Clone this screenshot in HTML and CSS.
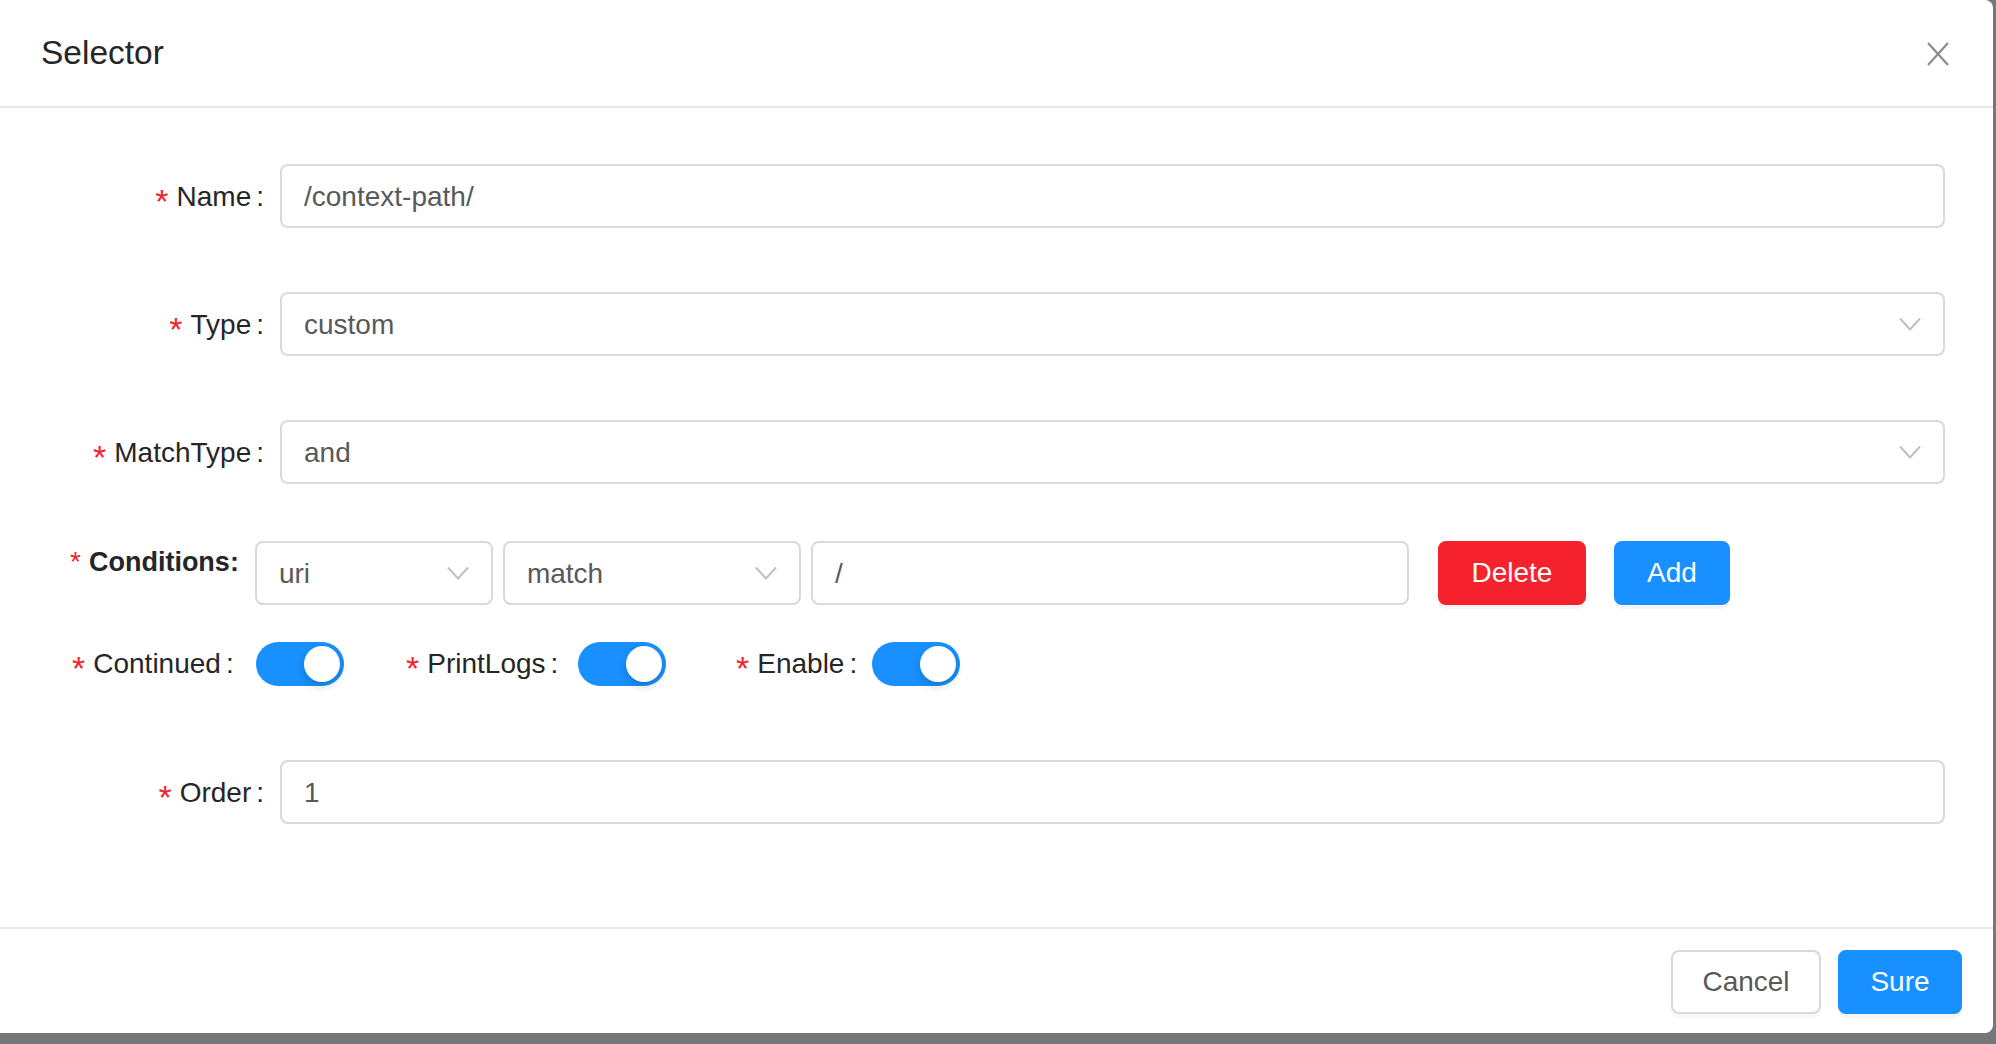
FILE: index.html
```html
<!DOCTYPE html>
<html lang="en">
<head>
<meta charset="utf-8">
<title>Selector</title>
<link rel="stylesheet" href="styles.css">
</head>
<body>
<div class="modal">
  <div class="modal-header">
    <div class="modal-title">Selector</div>
    <span class="modal-close">
      <svg width="22" height="24" viewBox="0 0 22 24"><path d="M1 1 L21 23 M21 1 L1 23" stroke="#8c8c8c" stroke-width="2.2" fill="none"/></svg>
    </span>
  </div>
  <div class="modal-body">
    <div class="form-row">
      <label class="form-label"><span class="req">*</span>Name<span class="colon">:</span></label>
      <div class="field input">/context-path/</div>
    </div>
    <div class="form-row">
      <label class="form-label"><span class="req">*</span>Type<span class="colon">:</span></label>
      <div class="field select"><span>custom</span>
        <svg class="chev" width="22" height="14" viewBox="0 0 22 14"><polyline points="1,1.5 11,12.5 21,1.5" stroke="#bfbfbf" stroke-width="2" fill="none"/></svg>
      </div>
    </div>
    <div class="form-row">
      <label class="form-label"><span class="req">*</span>MatchType<span class="colon">:</span></label>
      <div class="field select"><span>and</span>
        <svg class="chev" width="22" height="14" viewBox="0 0 22 14"><polyline points="1,1.5 11,12.5 21,1.5" stroke="#bfbfbf" stroke-width="2" fill="none"/></svg>
      </div>
    </div>
    <div class="cond-row">
      <label class="cond-label"><span class="req-top">*</span>Conditions:</label>
      <div class="field select cond-uri"><span>uri</span>
        <svg class="chev" width="22" height="14" viewBox="0 0 22 14"><polyline points="1,1.5 11,12.5 21,1.5" stroke="#bfbfbf" stroke-width="2" fill="none"/></svg>
      </div>
      <div class="field select cond-op"><span>match</span>
        <svg class="chev" width="22" height="14" viewBox="0 0 22 14"><polyline points="1,1.5 11,12.5 21,1.5" stroke="#bfbfbf" stroke-width="2" fill="none"/></svg>
      </div>
      <div class="field input cond-val">/</div>
      <button class="btn btn-danger">Delete</button>
      <button class="btn btn-primary btn-add">Add</button>
    </div>
    <div class="switch-row">
      <div class="switch-item item-continued">
        <label class="switch-label"><span class="req">*</span>Continued<span class="colon">:</span></label>
        <span class="switch"><span class="knob"></span></span>
      </div>
      <div class="switch-item item-logs">
        <label class="switch-label"><span class="req">*</span>PrintLogs<span class="colon">:</span></label>
        <span class="switch"><span class="knob"></span></span>
      </div>
      <div class="switch-item item-enable">
        <label class="switch-label"><span class="req">*</span>Enable<span class="colon">:</span></label>
        <span class="switch"><span class="knob"></span></span>
      </div>
    </div>
    <div class="form-row order-row">
      <label class="form-label"><span class="req">*</span>Order<span class="colon">:</span></label>
      <div class="field input">1</div>
    </div>
  </div>
  <div class="modal-footer">
    <button class="btn btn-default">Cancel</button>
    <button class="btn btn-primary">Sure</button>
  </div>
</div>
</body>
</html>
```

FILE: styles.css
```css
* { box-sizing: border-box; }

html, body {
  margin: 0;
  padding: 0;
}

body {
  width: 1996px;
  height: 1044px;
  overflow: hidden;
  background: #76777a;
  font-family: "Liberation Sans", Arial, sans-serif;
  font-size: 28px;
  color: #262626;
}

.modal {
  width: 1993px;
  height: 1033px;
  background: #ffffff;
  border-radius: 0 8px 8px 0;
  display: flex;
  flex-direction: column;
}

.modal-header {
  height: 108px;
  border-bottom: 2px solid #e8e8e8;
  display: flex;
  align-items: center;
  justify-content: space-between;
  padding: 0 44px 0 41px;
}

.modal-title {
  font-size: 33.5px;
  line-height: 44px;
  color: #262626;
  margin-top: 0;
}

.modal-close {
  display: flex;
  width: 22px;
  height: 24px;
  margin-top: 2px;
}

.modal-body {
  flex: 1;
  padding: 56px 48px 0 0;
}

.form-row {
  display: flex;
  align-items: center;
  height: 64px;
  margin-bottom: 64px;
}

.form-label {
  width: 280px;
  flex: none;
  padding-right: 16px;
  text-align: right;
  color: #262626;
  white-space: nowrap;
  line-height: 44px;
  margin-top: 1px;
}

.req {
  color: #f5222d;
  font-size: 34px;
  vertical-align: -7px;
  margin-right: 8px;
  line-height: 0;
}

.colon {
  margin-left: 5px;
}

.field {
  height: 64px;
  border: 2px solid #d9d9d9;
  border-radius: 8px;
  background: #fff;
  color: #595959;
  display: flex;
  align-items: center;
  padding: 2px 22px 0;
  white-space: nowrap;
}

.form-row .field {
  flex: 1;
}

.select {
  justify-content: space-between;
}

.chev {
  flex: none;
  margin-top: -2px;
}

.cond-row {
  display: flex;
  align-items: flex-start;
  height: 64px;
  margin-top: -7px;
  padding-left: 70px;
}

.cond-label {
  font-size: 27px;
  font-weight: bold;
  line-height: 44px;
  color: #262626;
  margin-right: 16px;
  white-space: nowrap;
  margin-top: -1px;
}

.req-top {
  color: #f5222d;
  font-weight: normal;
  font-size: 28px;
  margin-right: 8px;
}

.cond-uri {
  width: 238px;
  margin-right: 10px;
}

.cond-op {
  width: 298px;
  margin-right: 10px;
}

.cond-val {
  width: 598px;
  margin-right: 29px;
}

.btn {
  height: 64px;
  padding: 0 30px;
  border-radius: 8px;
  border: 2px solid #d9d9d9;
  font-family: "Liberation Sans", Arial, sans-serif;
  font-size: 28px;
  background: #fff;
  color: #595959;
  box-shadow: 0 4px 0 rgba(0, 0, 0, 0.03);
  white-space: nowrap;
}

.btn-danger {
  background: #f5222d;
  border-color: #f5222d;
  color: #fff;
  box-shadow: 0 4px 0 rgba(0, 0, 0, 0.045);
  width: 148px;
  padding: 0;
}

.btn-primary {
  background: #1890ff;
  border-color: #1890ff;
  color: #fff;
  box-shadow: 0 4px 0 rgba(0, 0, 0, 0.045);
}

.btn-add {
  width: 116px;
  padding: 0;
  margin-left: 28px;
}

.switch-row {
  display: flex;
  align-items: center;
  height: 44px;
  margin-top: 37px;
  padding-left: 72px;
}

.switch-item {
  display: flex;
  align-items: center;
  flex: none;
}

.switch-label {
  white-space: nowrap;
  color: #262626;
  line-height: 44px;
  margin-top: 0;
}

.item-continued { width: 334px; }
.item-continued .switch-label { width: 184px; }

.item-logs { width: 330px; }
.item-logs .switch-label { width: 172px; }

.item-enable .switch-label { width: 136px; }

.switch {
  width: 88px;
  height: 44px;
  border-radius: 22px;
  background: #1890ff;
  display: flex;
  align-items: center;
  justify-content: flex-end;
  padding: 0 4px;
  flex: none;
}

.knob {
  width: 36px;
  height: 36px;
  border-radius: 50%;
  background: #fff;
  box-shadow: 0 4px 8px rgba(0, 35, 11, 0.2);
}

.order-row {
  margin-top: 74px;
  margin-bottom: 0;
}

.modal-footer {
  height: 106px;
  border-top: 2px solid #e8e8e8;
  display: flex;
  justify-content: flex-end;
  align-items: center;
  gap: 17px;
  padding: 2px 31px 0 0;
}

.modal-footer .btn-default {
  width: 150px;
  padding: 0;
}

.modal-footer .btn-primary {
  width: 124px;
  padding: 0;
}
```
